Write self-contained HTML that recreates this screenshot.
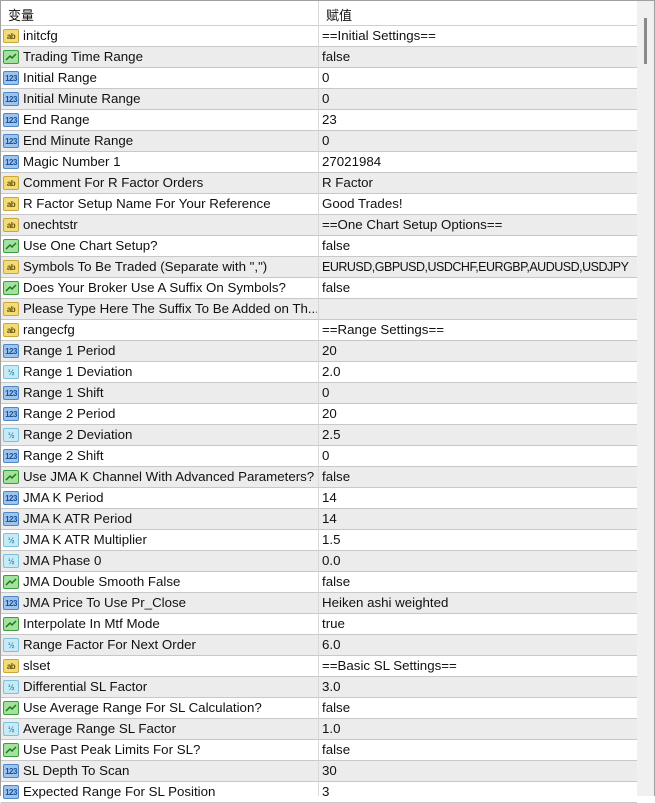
<!DOCTYPE html>
<html><head><meta charset="utf-8"><style>
*{margin:0;padding:0;box-sizing:border-box}
body{width:655px;height:796px;overflow:hidden;background:#fff;font-family:"Liberation Sans","Noto Sans CJK SC",sans-serif;font-size:13.3px;color:#111;position:relative}
.frame{position:absolute;left:0;top:0;width:655px;height:796px;border:1px solid #a0a0a0;border-bottom:none}
.hdr{position:absolute;left:1px;top:1px;width:636px;height:25px;background:#fff;border-bottom:1px solid #d0d0d0}
.hdr span{position:absolute;top:4px;font-size:13px}
.vd{position:absolute;left:318px;top:1px;width:1px;height:795px;background:#d8d8d8}
.r{position:absolute;left:1px;width:636px;height:21px;border-bottom:1px solid #c8c8c8}
.g{background:#ececec}
.r .n{position:absolute;left:22px;top:2px;white-space:nowrap;max-width:294px;overflow:hidden}
.r .v{position:absolute;left:321px;top:2px;white-space:nowrap}
.i{position:absolute;left:2px;top:3px;width:16px;height:14px;border-radius:2px;font-size:8px;font-weight:bold;line-height:13px;text-align:center;letter-spacing:-0.5px}
.ab{background:#f2dc7a;border:1px solid #c8a838;color:#6a5000}
.nm{background:#9cc4ec;border:1px solid #4f86c6;color:#1d4f95}
.fr{background:#c6eaf6;border:1px solid #7cc0dc;color:#3a8ab0}
.bl{background:#a6e0a0;border:1px solid #3a9e3a}
.sb{position:absolute;left:637px;top:1px;width:17px;height:795px;background:#f0f0f0}
.th{position:absolute;left:644px;top:18px;width:3px;height:46px;background:#8a8a8a}
</style></head><body>
<div class="frame"></div>
<div class="hdr"><span style="left:7px">变量</span><span style="left:325px">赋值</span></div>
<div class="r" style="top:26px"><div class="i ab">ab</div><span class="n">initcfg</span><span class="v">==Initial Settings==</span></div>
<div class="r g" style="top:47px"><div class="i bl"><svg width="14" height="12"><path d="M2 9 L6 5 L8 7 L12 3" stroke="#1a7a1a" stroke-width="1.5" fill="none"/></svg></div><span class="n">Trading Time Range</span><span class="v">false</span></div>
<div class="r" style="top:68px"><div class="i nm">123</div><span class="n">Initial Range</span><span class="v">0</span></div>
<div class="r g" style="top:89px"><div class="i nm">123</div><span class="n">Initial Minute Range</span><span class="v">0</span></div>
<div class="r" style="top:110px"><div class="i nm">123</div><span class="n">End Range</span><span class="v">23</span></div>
<div class="r g" style="top:131px"><div class="i nm">123</div><span class="n">End Minute Range</span><span class="v">0</span></div>
<div class="r" style="top:152px"><div class="i nm">123</div><span class="n">Magic Number 1</span><span class="v">27021984</span></div>
<div class="r g" style="top:173px"><div class="i ab">ab</div><span class="n">Comment For R Factor Orders</span><span class="v">R Factor</span></div>
<div class="r" style="top:194px"><div class="i ab">ab</div><span class="n">R Factor Setup Name For Your Reference</span><span class="v">Good Trades!</span></div>
<div class="r g" style="top:215px"><div class="i ab">ab</div><span class="n">onechtstr</span><span class="v">==One Chart Setup Options==</span></div>
<div class="r" style="top:236px"><div class="i bl"><svg width="14" height="12"><path d="M2 9 L6 5 L8 7 L12 3" stroke="#1a7a1a" stroke-width="1.5" fill="none"/></svg></div><span class="n">Use One Chart Setup?</span><span class="v">false</span></div>
<div class="r g" style="top:257px"><div class="i ab">ab</div><span class="n">Symbols To Be Traded (Separate with ",")</span><span class="v" style="font-size:12.5px;letter-spacing:-0.5px;top:3px">EURUSD,GBPUSD,USDCHF,EURGBP,AUDUSD,USDJPY</span></div>
<div class="r" style="top:278px"><div class="i bl"><svg width="14" height="12"><path d="M2 9 L6 5 L8 7 L12 3" stroke="#1a7a1a" stroke-width="1.5" fill="none"/></svg></div><span class="n">Does Your Broker Use A Suffix On Symbols?</span><span class="v">false</span></div>
<div class="r g" style="top:299px"><div class="i ab">ab</div><span class="n">Please Type Here The Suffix To Be Added on Th...</span><span class="v"></span></div>
<div class="r" style="top:320px"><div class="i ab">ab</div><span class="n">rangecfg</span><span class="v">==Range Settings==</span></div>
<div class="r g" style="top:341px"><div class="i nm">123</div><span class="n">Range 1 Period</span><span class="v">20</span></div>
<div class="r" style="top:362px"><div class="i fr">½</div><span class="n">Range 1 Deviation</span><span class="v">2.0</span></div>
<div class="r g" style="top:383px"><div class="i nm">123</div><span class="n">Range 1 Shift</span><span class="v">0</span></div>
<div class="r" style="top:404px"><div class="i nm">123</div><span class="n">Range 2 Period</span><span class="v">20</span></div>
<div class="r g" style="top:425px"><div class="i fr">½</div><span class="n">Range 2 Deviation</span><span class="v">2.5</span></div>
<div class="r" style="top:446px"><div class="i nm">123</div><span class="n">Range 2 Shift</span><span class="v">0</span></div>
<div class="r g" style="top:467px"><div class="i bl"><svg width="14" height="12"><path d="M2 9 L6 5 L8 7 L12 3" stroke="#1a7a1a" stroke-width="1.5" fill="none"/></svg></div><span class="n">Use JMA K Channel With Advanced Parameters?</span><span class="v">false</span></div>
<div class="r" style="top:488px"><div class="i nm">123</div><span class="n">JMA K Period</span><span class="v">14</span></div>
<div class="r g" style="top:509px"><div class="i nm">123</div><span class="n">JMA K ATR Period</span><span class="v">14</span></div>
<div class="r" style="top:530px"><div class="i fr">½</div><span class="n">JMA K ATR Multiplier</span><span class="v">1.5</span></div>
<div class="r g" style="top:551px"><div class="i fr">½</div><span class="n">JMA Phase 0</span><span class="v">0.0</span></div>
<div class="r" style="top:572px"><div class="i bl"><svg width="14" height="12"><path d="M2 9 L6 5 L8 7 L12 3" stroke="#1a7a1a" stroke-width="1.5" fill="none"/></svg></div><span class="n">JMA Double Smooth False</span><span class="v">false</span></div>
<div class="r g" style="top:593px"><div class="i nm">123</div><span class="n">JMA Price To Use Pr_Close</span><span class="v">Heiken ashi weighted</span></div>
<div class="r" style="top:614px"><div class="i bl"><svg width="14" height="12"><path d="M2 9 L6 5 L8 7 L12 3" stroke="#1a7a1a" stroke-width="1.5" fill="none"/></svg></div><span class="n">Interpolate In Mtf Mode</span><span class="v">true</span></div>
<div class="r g" style="top:635px"><div class="i fr">½</div><span class="n">Range Factor For Next Order</span><span class="v">6.0</span></div>
<div class="r" style="top:656px"><div class="i ab">ab</div><span class="n">slset</span><span class="v">==Basic SL Settings==</span></div>
<div class="r g" style="top:677px"><div class="i fr">½</div><span class="n">Differential SL Factor</span><span class="v">3.0</span></div>
<div class="r" style="top:698px"><div class="i bl"><svg width="14" height="12"><path d="M2 9 L6 5 L8 7 L12 3" stroke="#1a7a1a" stroke-width="1.5" fill="none"/></svg></div><span class="n">Use Average Range For SL Calculation?</span><span class="v">false</span></div>
<div class="r g" style="top:719px"><div class="i fr">½</div><span class="n">Average Range SL Factor</span><span class="v">1.0</span></div>
<div class="r" style="top:740px"><div class="i bl"><svg width="14" height="12"><path d="M2 9 L6 5 L8 7 L12 3" stroke="#1a7a1a" stroke-width="1.5" fill="none"/></svg></div><span class="n">Use Past Peak Limits For SL?</span><span class="v">false</span></div>
<div class="r g" style="top:761px"><div class="i nm">123</div><span class="n">SL Depth To Scan</span><span class="v">30</span></div>
<div class="r" style="top:782px"><div class="i nm">123</div><span class="n">Expected Range For SL Position</span><span class="v">3</span></div>
<div class="vd"></div>
<div class="sb"></div><div class="th"></div>
</body></html>
